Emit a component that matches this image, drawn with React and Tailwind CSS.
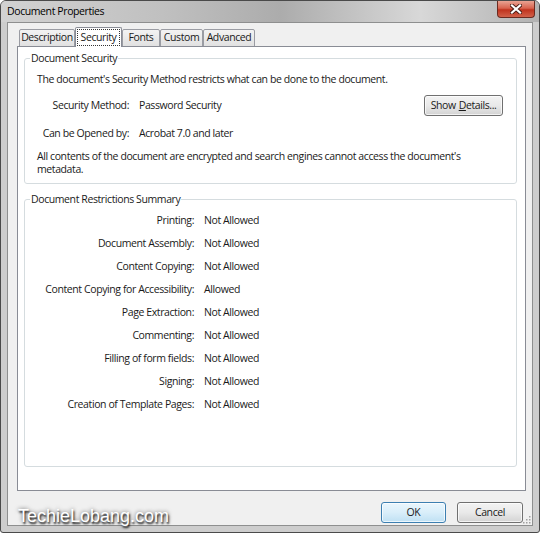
import React from 'react';

const restrictions = [
  ['Printing:', 'Not Allowed'],
  ['Document Assembly:', 'Not Allowed'],
  ['Content Copying:', 'Not Allowed'],
  ['Content Copying for Accessibility:', 'Allowed'],
  ['Page Extraction:', 'Not Allowed'],
  ['Commenting:', 'Not Allowed'],
  ['Filling of form fields:', 'Not Allowed'],
  ['Signing:', 'Not Allowed'],
  ['Creation of Template Pages:', 'Not Allowed'],
];

const tabs = [
  { label: 'Description', w: 'w-[56px] ml-[2px]' },
  { label: 'Security', w: 'w-[47px]', active: true },
  { label: 'Fonts', w: 'w-[38px]' },
  { label: 'Custom', w: 'w-[43px]' },
  { label: 'Advanced', w: 'w-[52px]' },
];

const Tab = ({ label, w, active }) =>
  active ? (
    <div className={`${w} h-[20px] relative z-10 bg-white border border-b-0 border-[#898c95] rounded-t-[2px] flex items-center justify-center`}>
      <span className="px-[2px] leading-[13px] outline-1 outline-dotted outline-[#333] outline-offset-[1px]">{label}</span>
    </div>
  ) : (
    <div className={`${w} h-[18px] bg-gradient-to-b from-[#f3f3f3] to-[#e1e1e1] border border-[#9a9ca3] rounded-t-[2px] flex items-center justify-center pb-[1px]`}>
      {label}
    </div>
  );

const WinButton = ({ children, className = '', primary }) => (
  <button
    type="button"
    className={`h-[21px] rounded-[3px] border ${primary ? 'border-[#3c7fb1] bg-gradient-to-b from-[#eaf6fd] via-[#d9eefa] to-[#bfe0f3]' : 'border-[#707070] bg-gradient-to-b from-[#f3f3f3] via-[#e9e9e9] to-[#d3d3d3]'} shadow-[inset_0_0_0_1px_rgba(255,255,255,0.7)] flex items-center justify-center text-[#1a1a1a] ${className}`}
  >
    {children}
  </button>
);

export default function App() {
  return (
    <div className="w-[540px] h-[533px] flex flex-col bg-[#cdcdcd] border border-[#4a4a4a] rounded-t-[6px] rounded-b-[3px] overflow-hidden font-['Open_Sans','Noto_Sans',sans-serif] text-[10.5px] tracking-[-0.4px] leading-[13px] text-[#1a1a1a]">
      {/* title bar */}
      <div className="h-[21px] shrink-0 flex items-start justify-between bg-[linear-gradient(to_right,#d2d2d2_0%,#c0c0c0_30%,#acacac_52%,#d8d8d8_78%,#c6c6c6_88%,#b2b2b2_100%)]">
        <span className="pl-[6px] pt-[4px] text-black">Document Properties</span>
        <div className="mr-[4px] w-[38px] h-[17px] rounded-b-[4px] border border-t-0 border-[#6b2a20] bg-[linear-gradient(to_bottom,#e9a393_0%,#d8634e_45%,#c0331e_55%,#d2614a_100%)] flex items-center justify-center">
          <svg width="12" height="10" viewBox="0 0 12 10">
            <path d="M2 1.5 L10 8.5 M10 1.5 L2 8.5" stroke="#4a1d16" strokeWidth="4" strokeLinecap="square" />
            <path d="M2 1.5 L10 8.5 M10 1.5 L2 8.5" stroke="#ffffff" strokeWidth="2.2" strokeLinecap="square" />
          </svg>
        </div>
      </div>

      {/* client area */}
      <div className="relative flex-1 mx-[6px] mb-[6px] border border-[#8e8f8f] bg-[#f0f0f0] flex flex-col pl-[9px] pr-[6px] pt-[4px]">
        <div className="flex items-end h-[20px]">
          {tabs.map((t) => (
            <Tab key={t.label} {...t} />
          ))}
        </div>

        <div className="-mt-[1px] h-[445px] bg-white border border-[#898c95] flex flex-col pl-[6px] pr-[8px] pt-[4px] pb-[23px]">
          <fieldset className="border border-[#d5dcdf] rounded-[3px] pl-[12px] pr-[13px] pb-[7px]">
            <legend className="-ml-[7px] px-[1px] leading-[14px]">Document Security</legend>
            <p className="mt-[8px]">The document's Security Method restricts what can be done to the document.</p>
            <div className="mt-[9px] h-[21px] flex items-center">
              <span className="w-[92px] text-right">Security Method:</span>
              <span className="ml-[10px]">Password Security</span>
              <WinButton className="ml-auto w-[79px]">
                Show <span className="underline underline-offset-[1px] ml-[3px]">D</span>etails...
              </WinButton>
            </div>
            <div className="mt-[10px] h-[14px] flex items-center">
              <span className="w-[92px] text-right">Can be Opened by:</span>
              <span className="ml-[10px]">Acrobat 7.0 and later</span>
            </div>
            <p className="mt-[10px]">
              All contents of the document are encrypted and search engines cannot access the document's metadata.
            </p>
          </fieldset>

          <fieldset className="mt-[8px] flex-1 border border-[#d5dcdf] rounded-[3px] pl-[12px]">
            <legend className="-ml-[7px] px-[1px] leading-[14px]">Document Restrictions Summary</legend>
            <div className="mt-[3px] flex flex-col">
              {restrictions.map(([label, value]) => (
                <div key={label} className="h-[23px] flex items-center">
                  <span className="w-[157px] text-right">{label}</span>
                  <span className="ml-[10px]">{value}</span>
                </div>
              ))}
            </div>
          </fieldset>
        </div>

        <div className="mt-[11px] h-[21px] flex items-center pl-[1px] pr-[3px]">
          <span className="font-['Liberation_Sans',Arial,sans-serif] text-[18px] tracking-normal leading-none text-white [text-shadow:1px_2px_2px_rgba(0,0,0,0.85),0_0_4px_rgba(0,0,0,0.6)] translate-y-[3px]">
            TechieLobang.com
          </span>
          <WinButton primary className="ml-auto w-[65px]">OK</WinButton>
          <WinButton className="ml-[11px] w-[66px]">Cancel</WinButton>
        </div>

        <svg className="absolute right-[1px] bottom-[1px]" width="8" height="8" viewBox="0 0 8 8">
          {[[6, 0], [6, 3], [3, 3], [6, 6], [3, 6], [0, 6]].map(([x, y]) => (
            <rect key={`${x}-${y}`} x={x} y={y} width="1.5" height="1.5" fill="#a0a0a0" />
          ))}
        </svg>
      </div>
    </div>
  );
}
